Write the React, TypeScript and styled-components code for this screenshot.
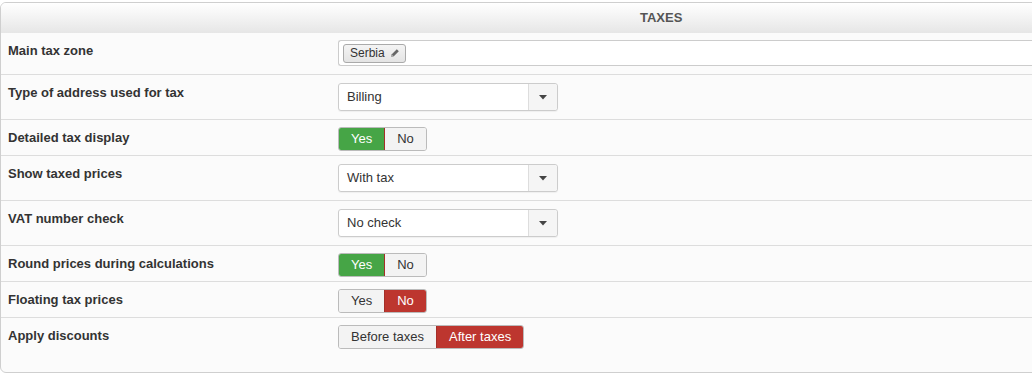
import React, { FC } from 'react'
import styled, { createGlobalStyle } from 'styled-components'

const GlobalStyle = createGlobalStyle`
	html, body {
		margin: 0;
		padding: 0;
		background: #ffffff;
		overflow: hidden;
	}
	body {
		font-family: 'Liberation Sans', Arial, sans-serif;
		font-size: 13px;
		color: #333;
	}
`

type Choice = { label: string; tone?: 'success' | 'danger' }

type Setting =
	| { kind: 'tags'; label: string; tags: string[] }
	| { kind: 'select'; label: string; value: string }
	| { kind: 'toggle'; label: string; options: Choice[]; active: number }

const settings: Setting[] = [
	{ kind: 'tags', label: 'Main tax zone', tags: ['Serbia'] },
	{ kind: 'select', label: 'Type of address used for tax', value: 'Billing' },
	{
		kind: 'toggle',
		label: 'Detailed tax display',
		options: [{ label: 'Yes', tone: 'success' }, { label: 'No' }],
		active: 0
	},
	{ kind: 'select', label: 'Show taxed prices', value: 'With tax' },
	{ kind: 'select', label: 'VAT number check', value: 'No check' },
	{
		kind: 'toggle',
		label: 'Round prices during calculations',
		options: [{ label: 'Yes', tone: 'success' }, { label: 'No' }],
		active: 0
	},
	{
		kind: 'toggle',
		label: 'Floating tax prices',
		options: [{ label: 'Yes' }, { label: 'No', tone: 'danger' }],
		active: 1
	},
	{
		kind: 'toggle',
		label: 'Apply discounts',
		options: [{ label: 'Before taxes' }, { label: 'After taxes', tone: 'danger' }],
		active: 1
	}
]

const Pencil: FC = () => (
	<svg width="10" height="10" viewBox="0 0 10 10">
		<path d="M1.2 8.8 L1.8 6.2 L6.8 1.2 L8.8 3.2 L3.8 8.2 Z" fill="#666" />
		<path d="M1.2 8.8 L1.8 6.2 L3.8 8.2 Z" fill="#aaa" />
	</svg>
)

const Caret: FC = () => (
	<svg width="8" height="5" viewBox="0 0 8 5">
		<path d="M0 0 H8 L4 4.5 Z" fill="#444" />
	</svg>
)

const SettingValue: FC<{ setting: Setting }> = ({ setting }) => {
	if (setting.kind === 'tags')
		return (
			<TagInput>
				{setting.tags.map((t) => (
					<Tag key={t}>
						{t}
						<Pencil />
					</Tag>
				))}
			</TagInput>
		)

	if (setting.kind === 'select')
		return (
			<Select>
				<SelectText>{setting.value}</SelectText>
				<SelectArrow>
					<Caret />
				</SelectArrow>
			</Select>
		)

	return (
		<ButtonGroup>
			{setting.options.map((o, i) => (
				<ToggleButton key={o.label} $tone={i === setting.active ? o.tone : undefined}>
					{o.label}
				</ToggleButton>
			))}
		</ButtonGroup>
	)
}

const App: FC = () => (
	<>
		<GlobalStyle />
		<Panel>
			<Header>TAXES</Header>
			{settings.map((s, i) => (
				<Row key={s.label} $last={i === settings.length - 1}>
					<Label>{s.label}</Label>
					<Value $toggle={s.kind === 'toggle'} $tags={s.kind === 'tags'}>
						<SettingValue setting={s} />
					</Value>
				</Row>
			))}
		</Panel>
	</>
)

export default App

const Panel = styled.section`
	margin-top: 2px;
	width: 1060px;
	border: 1px solid #cfcfcf;
	border-radius: 6px;
	background: #fbfbfb;
	overflow: hidden;
`

const Header = styled.div`
	height: 30px;
	line-height: 30px;
	padding-left: 639px;
	font-weight: bold;
	font-size: 13px;
	color: #555;
	background: linear-gradient(to bottom, #ffffff, #e6e6e6);
`

const Row = styled.div<{ $last?: boolean }>`
	display: grid;
	grid-template-columns: 329px 1fr;
	align-items: start;
	border-bottom: ${({ $last }) => ($last ? 'none' : '1px solid #dddddd')};
	padding-bottom: ${({ $last }) => ($last ? '19px' : '0')};
`

const Label = styled.div`
	padding: 9px 7px 7px;
	line-height: 18px;
	font-weight: bold;
	color: #333;
`

const Value = styled.div<{ $toggle?: boolean; $tags?: boolean }>`
	padding: ${({ $toggle, $tags }) =>
		$toggle ? '7px 8px 4px' : $tags ? '7px 0 8px 8px' : '8px'};
`

const TagInput = styled.div`
	height: 24px;
	display: flex;
	align-items: center;
	padding-left: 4px;
	background: #fff;
	border: 1px solid #cccccc;
	border-right: none;
	border-radius: 3px 0 0 3px;
`

const Tag = styled.span`
	display: inline-flex;
	align-items: center;
	gap: 5px;
	height: 17px;
	padding: 0 5px 0 6px;
	font-size: 12px;
	color: #333;
	border: 1px solid #aaaaaa;
	border-radius: 3px;
	background: linear-gradient(to bottom, #f4f4f4, #e4e4e4);
`

const Select = styled.div`
	width: 218px;
	height: 26px;
	display: flex;
	background: #fff;
	border: 1px solid #cccccc;
	border-radius: 3px;
	box-shadow: 0 1px 1px rgba(0, 0, 0, 0.05);
`

const SelectText = styled.div`
	flex: 1;
	padding-left: 8px;
	line-height: 26px;
	color: #333;
`

const SelectArrow = styled.div`
	width: 28px;
	display: flex;
	align-items: center;
	justify-content: center;
	background: #f5f5f5;
	border-left: 1px solid #dddddd;
	border-radius: 0 3px 3px 0;
`

const ButtonGroup = styled.div`
	display: inline-flex;
	border: 1px solid #bbbbbb;
	border-radius: 3px;
	overflow: hidden;
`

const tones = {
	success: { bg: '#46a546', border: '#3d8f3d' },
	danger: { bg: '#bd362f', border: '#a42f29' }
}

const ToggleButton = styled.span<{ $tone?: 'success' | 'danger' }>`
	height: 22px;
	line-height: 22px;
	padding: 0 12px;
	color: ${({ $tone }) => ($tone ? '#fff' : '#333')};
	background: ${({ $tone }) => ($tone ? tones[$tone].bg : '#f3f3f3')};
	& + & {
		border-left: 1px solid ${({ $tone }) => ($tone ? tones[$tone].border : '#cccccc')};
	}
`
